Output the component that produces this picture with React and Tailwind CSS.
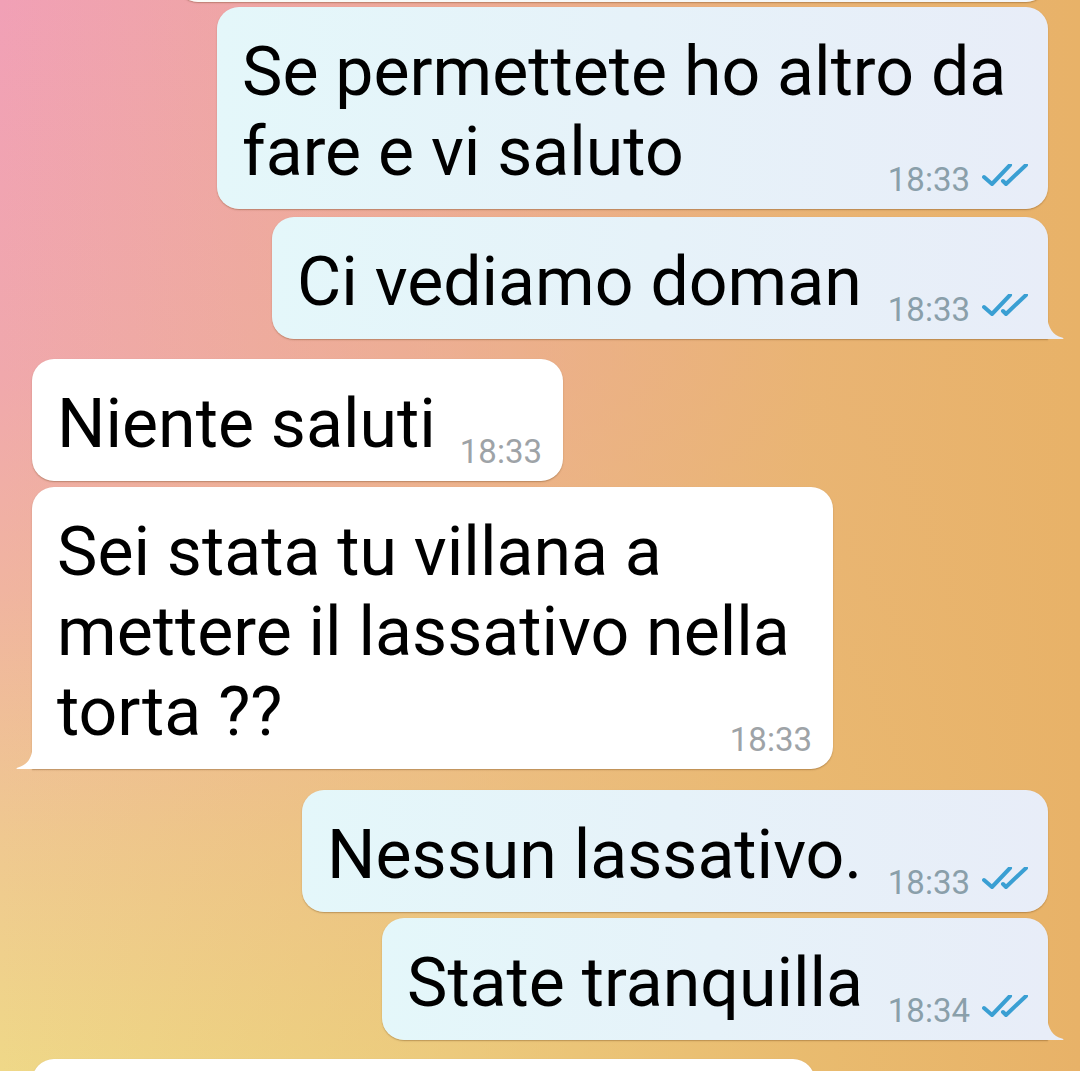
import React from 'react';

const Ticks = () => (
  <svg
    viewBox="0 0 46 23"
    className="mb-[5px] h-[23px] w-[46px] shrink-0"
    fill="none"
    stroke="#3a9fd3"
    strokeWidth="4"
    strokeLinecap="round"
    strokeLinejoin="round"
  >
    <path d="M2 13 L10 20 L28 1" />
    <path d="M21 17 L24 20 L44 1" />
  </svg>
);

const Tail = ({ out }) =>
  out ? (
    <svg viewBox="0 0 17 24" className="absolute bottom-0 -right-[16px] h-[24px] w-[17px]">
      <path d="M0 0 C1 14 6 20 15 22.5 C17 23 17 24 15.5 24 L0 24 Z" fill="#e8edf8" />
    </svg>
  ) : (
    <svg viewBox="0 0 17 24" className="absolute bottom-0 -left-[16px] h-[24px] w-[17px]">
      <path d="M17 0 C16 14 11 20 2 22.5 C0 23 0 24 1.5 24 L17 24 Z" fill="#ffffff" />
    </svg>
  );

const Bubble = ({ out, width, lines, time, tail, className = '' }) => {
  const head = lines.slice(0, -1);
  const last = lines[lines.length - 1];
  const look = out
    ? 'self-end bg-linear-to-r from-[#e4f7fa] to-[#e8edf8] pr-[20px]'
    : 'self-start bg-white pr-[21px]';
  const corner = tail ? (out ? 'rounded-br-none' : 'rounded-bl-none') : '';

  return (
    <div
      className={`relative ${width} ${look} rounded-[22px] ${corner} pl-[25px] pt-[25px] pb-[17px] shadow-[0_1px_1.5px_rgba(90,50,10,0.35)] ${className}`}
    >
      {head.map((line) => (
        <div key={line} className="whitespace-nowrap">
          {line}
        </div>
      ))}
      <div className="flex items-end justify-between">
        <span className="whitespace-nowrap">{last}</span>
        <span className="flex items-end gap-[12px]">
          <span
            className={`text-[33px] leading-[24px] ${out ? 'text-[#8a9faa]' : 'text-[#9ea3a7]'}`}
          >
            {time}
          </span>
          {out ? <Ticks /> : null}
        </span>
      </div>
      {tail ? <Tail out={out} /> : null}
    </div>
  );
};

const App = () => {
  return (
    <div className="h-[1071px] w-full overflow-hidden bg-[linear-gradient(to_right,rgba(232,184,108,0)_0%,rgba(232,184,108,0.4)_40%,rgba(232,182,106,0.85)_75%,rgba(232,178,104,1)_100%),linear-gradient(to_bottom,#f1a0b6_0%,#f0a8ac_35%,#f0b4a0_55%,#efc890_78%,#efd888_100%)] font-['Roboto',sans-serif] text-[68px] leading-[80px] text-black">
      <div className="flex flex-col px-[32px]">
        {/* previous message, cut off at the top */}
        <div className="mt-[-120px] h-[122px] w-[872px] self-end rounded-[22px] bg-linear-to-r from-[#fbfbf8] to-[#f4f6f8] shadow-[0_1px_1.5px_rgba(90,50,10,0.35)]" />

        <Bubble
          out
          width="w-[831px]"
          className="mt-[5px]"
          lines={['Se permettete ho altro da', 'fare e vi saluto']}
          time="18:33"
        />
        <Bubble
          out
          tail
          width="w-[776px]"
          className="mt-[8px]"
          lines={['Ci vediamo doman']}
          time="18:33"
        />

        <Bubble width="w-[531px]" className="mt-[20px]" lines={['Niente saluti']} time="18:33" />
        <Bubble
          tail
          width="w-[801px]"
          className="mt-[6px]"
          lines={['Sei stata tu villana a', 'mettere il lassativo nella', 'torta ??']}
          time="18:33"
        />

        <Bubble
          out
          width="w-[746px]"
          className="mt-[21px]"
          lines={['Nessun lassativo.']}
          time="18:33"
        />
        <Bubble
          out
          tail
          width="w-[666px]"
          className="mt-[6px]"
          lines={['State tranquilla']}
          time="18:34"
        />

        {/* next message, cut off at the bottom */}
        <div className="mt-[19px] h-[122px] w-[783px] self-start rounded-[22px] bg-white shadow-[0_1px_1.5px_rgba(90,50,10,0.35)]" />
      </div>
    </div>
  );
};

export default App;
